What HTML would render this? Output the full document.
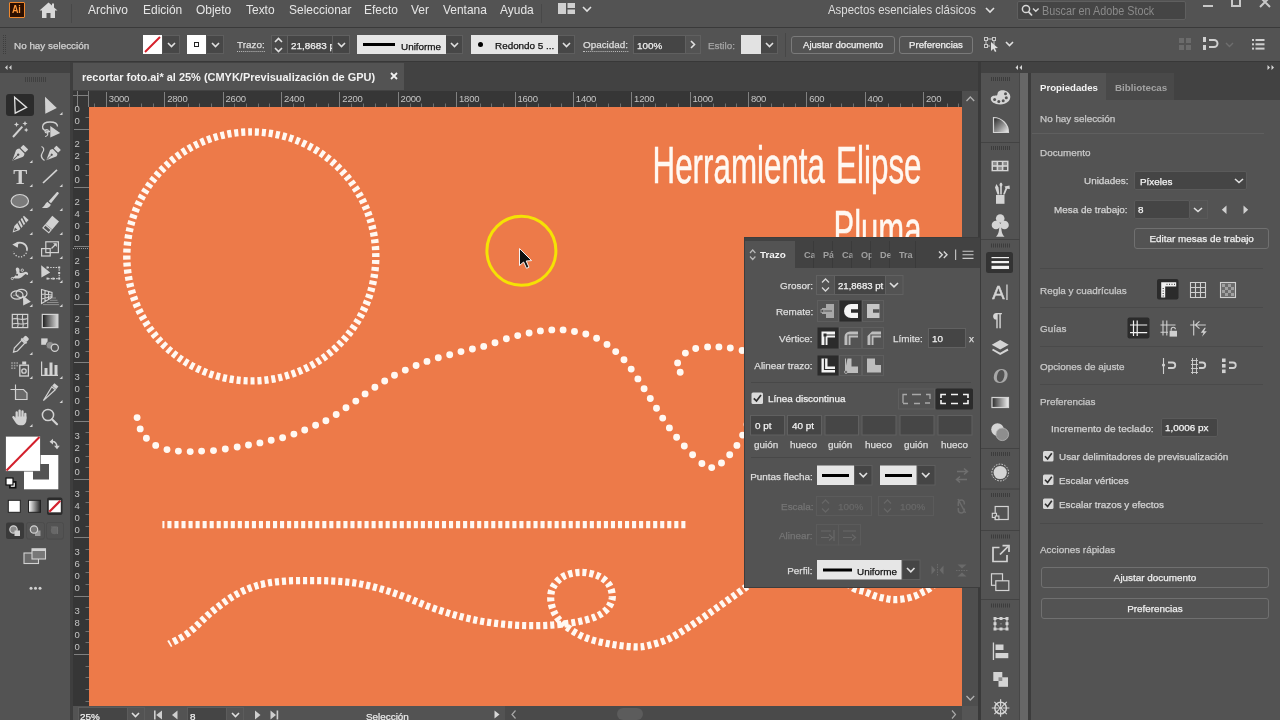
<!DOCTYPE html>
<html lang="es">
<head>
<meta charset="utf-8">
<title>recortar foto.ai</title>
<style>
*{box-sizing:border-box;margin:0;padding:0}
html,body{width:1280px;height:720px;overflow:hidden;background:#535353}
body{font-family:"Liberation Sans",sans-serif;font-size:11px;color:#dcdcdc;position:relative;-webkit-font-smoothing:antialiased}
.a{position:absolute}
.t{position:absolute;white-space:nowrap;line-height:14px;transform-origin:0 50%;transform:scaleX(.9)}
.tr{transform-origin:100% 50%}
.btn span{display:inline-block;transform:scaleX(1.03)}
svg{position:absolute;overflow:visible}
/* regions */
#menubar{left:0;top:0;width:1280px;height:27px;background:#535353}
#menuline{left:0;top:27px;width:1280px;height:1px;background:#3a3a3a}
#ctrlbar{left:0;top:28px;width:1280px;height:33px;background:#535353}
#ctrlline{left:0;top:61px;width:1280px;height:1px;background:#383838}
#tabwell{left:0;top:62px;width:1280px;height:29px;background:#424242}
.menu{font-size:13px;top:2px;color:#e6e6e6;line-height:15px;transform:scaleX(.92)}
.c{font-size:9.6px;line-height:15px;color:#dedede;transform:scaleX(1.03);-webkit-text-stroke:0.25px}
.field{position:absolute;background:#454545;border:1px solid #606060;border-radius:2px}
.btn{position:absolute;border:1px solid #7a7a7a;border-radius:3px;text-align:center;font-size:9.6px;-webkit-text-stroke:0.25px;color:#efefef;line-height:16px;white-space:nowrap}
.chev{stroke:#e0e0e0;stroke-width:1.6;fill:none}
</style>
</head>
<body>
<div id="root" style="position:absolute;left:0;top:0;width:1280px;height:720px;will-change:transform">
<!-- ===== top bars ===== -->
<div class="a" id="menubar"></div>
<div class="a" id="menuline"></div>
<div class="a" id="ctrlbar"></div>
<div class="a" id="ctrlline"></div>
<div class="a" id="tabwell"></div>
<!--MENUBAR-->
<div class="a" style="left:9px;top:2px;width:16px;height:16px;background:#2c0f00;border:1px solid #f0892e;border-radius:1px"></div>
<div class="t" style="left:12px;top:3px;font-size:10px;font-weight:bold;color:#ff9a3c;line-height:14px;letter-spacing:-0.3px">Ai</div>
<svg style="left:39px;top:2px" width="19" height="17" viewBox="0 0 19 17"><path d="M9.5 0.5L0.5 8.5H3V16H7.5V11H11.5V16H16V8.5H18.5L15 5.4V1.5H13V3.6Z" fill="#d8d8d8"/></svg>
<div class="a" style="left:71px;top:4px;width:1px;height:19px;background:#484848"></div>
<div class="t menu" style="left:88px">Archivo</div>
<div class="t menu" style="left:143px">Edición</div>
<div class="t menu" style="left:196px">Objeto</div>
<div class="t menu" style="left:246px">Texto</div>
<div class="t menu" style="left:289px">Seleccionar</div>
<div class="t menu" style="left:364px">Efecto</div>
<div class="t menu" style="left:411px">Ver</div>
<div class="t menu" style="left:443px">Ventana</div>
<div class="t menu" style="left:500px">Ayuda</div>
<div class="a" style="left:541px;top:4px;width:1px;height:19px;background:#484848"></div>
<svg style="left:558px;top:3px" width="17" height="12" viewBox="0 0 17 12"><rect x="0" y="0" width="8" height="11" fill="#d0d0d0"/><rect x="9.5" y="0" width="7.5" height="5" fill="#d0d0d0"/><rect x="9.5" y="6.5" width="7.5" height="4.5" fill="#d0d0d0"/></svg>
<svg style="left:582px;top:6px" width="10" height="7"><path class="chev" d="M1 1L5 5L9 1"/></svg>
<div class="t menu" style="left:828px;color:#dddddd;transform:scaleX(.879)">Aspectos esenciales clásicos</div>
<svg style="left:985px;top:7px" width="10" height="7"><path class="chev" d="M1 1L5 5L9 1"/></svg>
<div class="a" style="left:1017px;top:1px;width:169px;height:19px;background:#454545;border:1px solid #5f5f5f;border-radius:2px"></div>
<svg style="left:1021px;top:4px" width="20" height="13" viewBox="0 0 20 13"><circle cx="5" cy="5" r="3.6" stroke="#d8d8d8" stroke-width="1.5" fill="none"/><path d="M7.6 7.8L11 11.5" stroke="#d8d8d8" stroke-width="1.8"/><path d="M12 4.5L14.8 7.3L17.6 4.5" stroke="#d8d8d8" stroke-width="1.4" fill="none"/></svg>
<div class="t" style="left:1042px;top:4px;font-size:12px;color:#8a8a8a;line-height:14px">Buscar en Adobe Stock</div>
<div class="a" style="left:1203px;top:5px;width:10px;height:2px;background:#c8c8c8"></div>
<div class="a" style="left:1231px;top:0px;width:10px;height:7px;border:2px solid #c8c8c8;border-top:none"></div>
<svg style="left:1259px;top:0px" width="12" height="8"><path d="M1 -3L11 7M11 -3L1 7" stroke="#c8c8c8" stroke-width="2" fill="none"/></svg>

<!--/MENUBAR-->
<!--CTRLBAR-->
<svg style="left:3px;top:35px" width="5" height="19"><path d="M0.5 0V19M2.5 0V19" stroke="#3e3e3e" stroke-width="1" stroke-dasharray="1 1"/></svg>
<div class="t c" style="left:14px;top:38px;color:#d2d2d2">No hay selección</div>
<!-- fill swatch -->
<div class="a" style="left:143px;top:35px;width:19px;height:19px;background:#fff"></div>
<svg style="left:143px;top:35px" width="19" height="19"><path d="M2 17L17 2" stroke="#d6212b" stroke-width="2"/></svg>
<div class="a" style="left:163px;top:35px;width:17px;height:19px;background:#474747;border:1px solid #5e5e5e;border-left:none"></div>
<svg style="left:167px;top:42px" width="9" height="6"><path class="chev" d="M1 1L4.5 4.5L8 1"/></svg>
<!-- stroke swatch -->
<div class="a" style="left:187px;top:35px;width:19px;height:19px;background:#fff"></div>
<div class="a" style="left:194px;top:42px;width:5px;height:5px;border:1px solid #222"></div>
<div class="a" style="left:207px;top:35px;width:17px;height:19px;background:#474747;border:1px solid #5e5e5e;border-left:none"></div>
<svg style="left:211px;top:42px" width="9" height="6"><path class="chev" d="M1 1L4.5 4.5L8 1"/></svg>
<div class="t c" style="left:237px;top:38px;border-bottom:1px dotted #bdbdbd;line-height:13px">Trazo:</div>
<div class="a" style="left:271px;top:35px;width:17px;height:19px;background:#4a4a4a;border:1px solid #5e5e5e;border-right:none"></div>
<svg style="left:274px;top:37px" width="9" height="16"><path class="chev" d="M1 5L4.5 1.5L8 5M1 11L4.5 14.5L8 11" stroke-width="1.3"/></svg>
<div class="field" style="left:287px;top:35px;width:63px;height:19px;border-radius:0"></div>
<div class="t c" style="left:291px;top:38px;color:#f0f0f0;width:39.6px;overflow:hidden">21,8683 pt</div>
<div class="a" style="left:332px;top:36px;width:1px;height:17px;background:#5e5e5e"></div>
<svg style="left:337px;top:42px" width="9" height="6"><path class="chev" d="M1 1L4.5 4.5L8 1"/></svg>
<!-- profile -->
<div class="a" style="left:357px;top:35px;width:89px;height:19px;background:#e6e6e6"></div>
<div class="a" style="left:363px;top:43px;width:32px;height:3px;background:#000"></div>
<div class="t c" style="left:401px;top:39px;color:#111">Uniforme</div>
<div class="a" style="left:446px;top:35px;width:17px;height:19px;background:#474747;border:1px solid #5e5e5e;border-left:none"></div>
<svg style="left:450px;top:42px" width="9" height="6"><path class="chev" d="M1 1L4.5 4.5L8 1"/></svg>
<!-- brush -->
<div class="a" style="left:471px;top:35px;width:87px;height:19px;background:#e6e6e6"></div>
<div class="a" style="left:478px;top:42px;width:5px;height:5px;border-radius:50%;background:#000"></div>
<div class="t c" style="left:495px;top:38px;color:#111">Redondo 5 ...</div>
<div class="a" style="left:558px;top:35px;width:17px;height:19px;background:#474747;border:1px solid #5e5e5e;border-left:none"></div>
<svg style="left:562px;top:42px" width="9" height="6"><path class="chev" d="M1 1L4.5 4.5L8 1"/></svg>
<div class="t c" style="left:583px;top:38px;border-bottom:1px dotted #bdbdbd;line-height:13px">Opacidad:</div>
<div class="field" style="left:633px;top:35px;width:53px;height:19px;border-radius:0"></div>
<div class="a" style="left:685px;top:35px;width:16px;height:19px;border:1px solid #606060"></div>
<div class="t c" style="left:637px;top:38px;color:#f0f0f0">100%</div>
<svg style="left:690px;top:40px" width="6" height="9"><path class="chev" d="M1 1L4.5 4.5L1 8"/></svg>
<div class="t c" style="left:708px;top:38px;color:#a6a6a6">Estilo:</div>
<div class="a" style="left:785px;top:33px;width:1px;height:24px;background:#474747"></div>
<div class="a" style="left:741px;top:35px;width:20px;height:19px;background:#e2e2e2"></div>
<div class="a" style="left:761px;top:35px;width:17px;height:19px;background:#474747;border:1px solid #5e5e5e;border-left:none"></div>
<svg style="left:765px;top:42px" width="9" height="6"><path class="chev" d="M1 1L4.5 4.5L8 1"/></svg>
<div class="btn" style="left:791px;top:36px;width:104px;height:18px">Ajustar documento</div>
<div class="btn" style="left:899px;top:36px;width:74px;height:18px">Preferencias</div>
<!-- select-similar icon -->
<svg style="left:983px;top:36px" width="17" height="17" viewBox="0 0 17 17"><path d="M3 3H11V9M3 3V10H7" stroke="#c8c8c8" stroke-width="1" fill="none"/><rect x="1.5" y="1.5" width="3" height="3" fill="#535353" stroke="#c8c8c8"/><rect x="9.5" y="1.5" width="3" height="3" fill="#535353" stroke="#c8c8c8"/><rect x="1.5" y="8.5" width="3" height="3" fill="#535353" stroke="#c8c8c8"/><path d="M8 6L8 15L10.3 12.8L12 16L13.4 15.3L11.8 12.2L15 12Z" fill="#e0e0e0"/></svg>
<svg style="left:1005px;top:41px" width="9" height="6"><path class="chev" d="M1 1L4.5 4.5L8 1"/></svg>
<!-- right icons -->
<svg style="left:1179px;top:38px" width="13" height="13" viewBox="0 0 13 13"><g fill="#6b6b6b"><rect x="0" y="0" width="5" height="5"/><rect x="7" y="0" width="5" height="5"/><rect x="0" y="7" width="5" height="5"/><rect x="7" y="7" width="5" height="5"/></g></svg>
<svg style="left:1203px;top:37px" width="16" height="14" viewBox="0 0 16 14"><rect x="0" y="0" width="3" height="5" fill="#d0d0d0"/><rect x="0" y="8" width="3" height="5" fill="#d0d0d0"/><path d="M6 3H11A3.2 3.2 0 0 1 11 10H6" stroke="#d0d0d0" stroke-width="2" fill="none"/></svg>
<svg style="left:1225px;top:42px" width="9" height="6"><path d="M1 1L4.5 4.5L8 1" stroke="#6e6e6e" stroke-width="1.4" fill="none"/></svg>
<svg style="left:1252px;top:39px" width="13" height="11" viewBox="0 0 13 11"><g fill="#d0d0d0"><rect x="0" y="0" width="2" height="2"/><rect x="3.5" y="0" width="9" height="2"/><rect x="0" y="4.3" width="2" height="2"/><rect x="3.5" y="4.3" width="9" height="2"/><rect x="0" y="8.6" width="2" height="2"/><rect x="3.5" y="8.6" width="9" height="2"/></g></svg>

<!--/CTRLBAR-->
<!--TOOLBAR-->
<div class="a" style="left:0;top:62px;width:72px;height:11px;background:#424242"></div>
<div class="a" style="left:0;top:73px;width:72px;height:647px;background:#535353"></div>
<div class="a" style="left:6px;top:94px;width:28px;height:22px;background:#2b2b2b;border-radius:3px"></div>
<svg style="left:0;top:62px" width="72" height="658" viewBox="0 62 72 658">
<path d="M7.5 65L5 67.5L7.5 70ZM11.5 65L9 67.5L11.5 70Z" fill="#d0d0d0"/>
<path d="M25 77.5V82" stroke="#3d3d3d" stroke-width="17" stroke-dasharray="1 1" transform="rotate(0)" fill="none" style="display:none"/>
<path d="M25.5 77V82M27.5 77V82M29.5 77V82M31.5 77V82M33.5 77V82M35.5 77V82M37.5 77V82M39.5 77V82M41.5 77V82M43.5 77V82M45.5 77V82" stroke="#404040" stroke-width="1"/>
<path d="M14.6 97.3L15.2 113.2L26.6 107.4Z" fill="none" stroke="#e4e4e4" stroke-width="1.3" stroke-linejoin="miter"/>
<path d="M45 96.8L45.3 113.8L56.8 108Z" fill="#d2d2d2"/>
<path d="M62.5 112.0V115.0H59.5Z" fill="#d2d2d2"/>
<path d="M13 137L22.3 126.6" stroke="#d2d2d2" stroke-width="2"/>
<path d="M16.5 121.9L17.3 123.7L19.1 124.5L17.3 125.3L16.5 127.1L15.7 125.3L13.9 124.5L15.7 123.7Z" fill="#d2d2d2"/>
<path d="M25.0 120.9L25.8 122.7L27.6 123.5L25.8 124.3L25.0 126.1L24.2 124.3L22.4 123.5L24.2 122.7Z" fill="#d2d2d2"/>
<path d="M26.2 127.8L26.9 129.3L28.4 130.0L26.9 130.7L26.2 132.2L25.5 130.7L24.0 130.0L25.5 129.3Z" fill="#d2d2d2"/>
<path d="M50 131.5C44 131.5 42.3 128.5 42.6 126.5C43 123.5 46.5 122 50 122C54 122 57.5 123.5 57.5 126.5" fill="none" stroke="#d2d2d2" stroke-width="1.3"/>
<circle cx="46.7" cy="131.2" r="1.7" fill="none" stroke="#d2d2d2" stroke-width="1.1"/><path d="M47.5 132.8C48.5 134.5 47 136.5 45 136.5" fill="none" stroke="#d2d2d2" stroke-width="1.1"/>
<path d="M50.3 126L50.3 137.6L60.2 133Z" fill="#d2d2d2"/>
<g transform="translate(19.6 153.3) rotate(45) scale(1.10)"><path d="M0 9.5L-4.2 0.5C-4.6 -0.6 -4.2 -2 -3.2 -3L3.2 -3C4.2 -2 4.6 -0.6 4.2 0.5Z" fill="#d2d2d2"/><path d="M0 9V2.5" stroke="#535353" stroke-width="0.9"/><circle cx="0" cy="1.8" r="1.1" fill="#535353"/><rect x="-3.1" y="-8" width="6.2" height="3.9" rx="0.6" fill="#d2d2d2"/></g>
<path d="M32.5 160.0V163.0H29.5Z" fill="#d2d2d2"/>
<g transform="translate(53.0 153.5) rotate(45) scale(1.00)"><path d="M0 9.5L-4.2 0.5C-4.6 -0.6 -4.2 -2 -3.2 -3L3.2 -3C4.2 -2 4.6 -0.6 4.2 0.5Z" fill="#d2d2d2"/><path d="M0 9V2.5" stroke="#535353" stroke-width="0.9"/><circle cx="0" cy="1.8" r="1.1" fill="#535353"/><rect x="-3.1" y="-8" width="6.2" height="3.9" rx="0.6" fill="#d2d2d2"/></g>
<path d="M41.5 146.5C44 147.5 44.5 150 42.5 152.5C40.5 155.5 41.5 158.5 44.5 160.5" fill="none" stroke="#d2d2d2" stroke-width="1.2"/>
<text x="20.2" y="184.2" text-anchor="middle" font-family="Liberation Serif, serif" font-weight="bold" font-size="21" fill="#d2d2d2">T</text>
<path d="M32.5 184.0V187.0H29.5Z" fill="#d2d2d2"/>
<path d="M43 183L57 169.8" stroke="#d2d2d2" stroke-width="1.7"/>
<path d="M62.5 184.0V187.0H59.5Z" fill="#d2d2d2"/>
<ellipse cx="19.8" cy="201" rx="8.7" ry="6.5" fill="#7b7b7b" stroke="#d2d2d2" stroke-width="1.2"/>
<path d="M32.5 208.0V211.0H29.5Z" fill="#d2d2d2"/>
<g transform="translate(50.5 201.5) rotate(40)"><path d="M-1.2 -11.5C-0.5 -12.3 0.5 -12.3 1.2 -11.5L1.5 1H-1.5Z" fill="#d2d2d2"/><path d="M-2.3 2.2H2.3C3 5 2 8 -2.6 10.3C-1.5 8.5 -2.8 5 -2.3 2.2Z" fill="#d2d2d2"/></g>
<path d="M62.5 208.0V211.0H59.5Z" fill="#d2d2d2"/>
<g transform="translate(19.8 224.8) rotate(43)"><path d="M-3.2 -9.5H3.2V4.5L0 10.5L-3.2 4.5Z" fill="#d2d2d2"/><path d="M-3.6 -7.5L3.6 -5M-3.6 -4L3.6 -1.5M-3.6 -0.5L3.6 2" stroke="#535353" stroke-width="1.3"/><path d="M-1.7 5.3H1.7L0 8.6Z" fill="#535353"/></g>
<path d="M32.5 232.0V235.0H29.5Z" fill="#d2d2d2"/>
<g transform="translate(50.5 224.8) rotate(40)"><rect x="-4.4" y="-8" width="8.8" height="10.5" fill="#d2d2d2"/><rect x="-3.8" y="3.4" width="7.6" height="3.8" fill="none" stroke="#d2d2d2" stroke-width="1.2"/></g>
<path d="M62.5 232.0V235.0H59.5Z" fill="#d2d2d2"/>
<path d="M15.5 244.3A7 7 0 0 1 27 250" fill="none" stroke="#d2d2d2" stroke-width="1.7"/><path d="M12.3 244.6L18.5 241.4L17.8 247.8Z" fill="#d2d2d2"/>
<path d="M27 250A7 7 0 0 1 13.2 251.5" fill="none" stroke="#d2d2d2" stroke-width="1.3" stroke-dasharray="1.2 1.6"/>
<path d="M32.5 256.0V259.0H29.5Z" fill="#d2d2d2"/>
<rect x="45.8" y="241.8" width="12.6" height="10.8" fill="none" stroke="#d2d2d2" stroke-width="1.2"/><rect x="41.6" y="248.6" width="8.6" height="7.4" fill="none" stroke="#d2d2d2" stroke-width="1.2"/>
<path d="M51.5 248.5L56 244" stroke="#d2d2d2" stroke-width="1.2"/><path d="M53 243.3H56.8V247Z" fill="#d2d2d2"/>
<path d="M62.5 256.0V259.0H59.5Z" fill="#d2d2d2"/>
<path d="M12.3 277.5C15 277 17.5 274 16 270.5C15 268 17.5 266.5 19 268.5C20.5 270.5 18 273 21 273C24 273 25.5 270.5 27.5 272.5C29 274 27.5 276 26.5 274.5C25 272.5 23 278 19 278.5C16 278.8 14 278.5 12.3 277.5Z" fill="#d2d2d2"/><circle cx="22.3" cy="270.2" r="1.2" fill="none" stroke="#d2d2d2" stroke-width="0.9"/><circle cx="17" cy="274.8" r="1.1" fill="#535353"/><circle cx="12.3" cy="278.5" r="1.1" fill="none" stroke="#d2d2d2" stroke-width="0.9"/>
<path d="M32.5 280.0V283.0H29.5Z" fill="#d2d2d2"/>
<path d="M41.2 265.2L41.4 277.4L50.2 272.4Z" fill="#d2d2d2"/>
<path d="M47.5 267.5H59.2V278.6H47.5" fill="none" stroke="#d2d2d2" stroke-width="1.1" stroke-dasharray="1.5 1.2"/>
<rect x="46.5" y="266.5" width="2" height="2" fill="#d2d2d2"/>
<rect x="58.2" y="266.5" width="2" height="2" fill="#d2d2d2"/>
<rect x="58.2" y="277.6" width="2" height="2" fill="#d2d2d2"/>
<rect x="46.5" y="277.6" width="2" height="2" fill="#d2d2d2"/>
<rect x="52.3" y="277.6" width="2" height="2" fill="#d2d2d2"/>
<rect x="58.2" y="272.0" width="2" height="2" fill="#d2d2d2"/>
<path d="M62.5 280.0V283.0H59.5Z" fill="#d2d2d2"/>
<ellipse cx="17" cy="295" rx="6" ry="4.2" fill="none" stroke="#d2d2d2" stroke-width="1.2"/><ellipse cx="21.5" cy="293.5" rx="5.5" ry="4.2" fill="none" stroke="#d2d2d2" stroke-width="1.2"/><path d="M13.5 295.3H19" stroke="#d2d2d2" stroke-width="1.1" stroke-dasharray="1 1"/>
<path d="M23 295.5L23.2 305.5L30.8 301.8Z" fill="#d2d2d2"/>
<path d="M32.5 304.0V307.0H29.5Z" fill="#d2d2d2"/>
<path d="M41.5 289.5V303.5L52 297.5V292.5ZM41.5 294L52 295M41.5 299L52 296.5M45 290.5V301.5M48.5 291.5V299.5" fill="none" stroke="#d2d2d2" stroke-width="1.1"/>
<path d="M52 298H56M50 300.3H57.5M47 302.5H58.5M43 304.6H59" stroke="#8d8d8d" stroke-width="1"/>
<path d="M62.5 304.0V307.0H59.5Z" fill="#d2d2d2"/>
<rect x="12.3" y="314.4" width="15.4" height="13.2" fill="none" stroke="#d2d2d2" stroke-width="1.2"/><path d="M12.3 319C17 317.5 21 321 27.7 318.5M12.3 324C17 322 22 326 27.7 323M17.5 314.4C16 319 19.5 323 17.5 327.6M22.8 314.4C21 319 24.5 323 22.8 327.6" fill="none" stroke="#d2d2d2" stroke-width="1.1"/>
<defs><linearGradient id="gr1" x1="0" x2="1"><stop offset="0" stop-color="#1a1a1a"/><stop offset="1" stop-color="#dcdcdc"/></linearGradient></defs>
<rect x="42.3" y="314.4" width="15.6" height="13.2" fill="url(#gr1)" stroke="#d2d2d2" stroke-width="1.2"/>
<g transform="translate(20.3 344.8) rotate(43)"><rect x="-2.6" y="-10.5" width="5.2" height="4.5" rx="1.4" fill="#d2d2d2"/><rect x="-3.6" y="-6.3" width="7.2" height="2" fill="#d2d2d2"/><path d="M-2.1 -4.2V6.5L0 10L2.1 6.5V-4.2Z" fill="none" stroke="#d2d2d2" stroke-width="1.2"/></g>
<path d="M32.5 352.0V355.0H29.5Z" fill="#d2d2d2"/>
<rect x="41.2" y="338.4" width="6.4" height="6.4" fill="#d2d2d2"/><circle cx="50" cy="345.3" r="3.9" fill="#8c8c8c" stroke="#535353" stroke-width="0.8"/><circle cx="54.8" cy="347.8" r="3.6" fill="#535353" stroke="#d2d2d2" stroke-width="1.2"/>
<rect x="11.2" y="362.2" width="1.6" height="1.6" fill="#9c9c9c"/>
<rect x="11.2" y="364.8" width="1.6" height="1.6" fill="#9c9c9c"/>
<rect x="11.2" y="367.4" width="1.6" height="1.6" fill="#9c9c9c"/>
<rect x="13.8" y="362.2" width="1.6" height="1.6" fill="#9c9c9c"/>
<rect x="13.8" y="364.8" width="1.6" height="1.6" fill="#9c9c9c"/>
<rect x="13.8" y="367.4" width="1.6" height="1.6" fill="#9c9c9c"/>
<rect x="16.4" y="362.2" width="1.6" height="1.6" fill="#9c9c9c"/>
<rect x="16.4" y="364.8" width="1.6" height="1.6" fill="#9c9c9c"/>
<rect x="19.8" y="365.2" width="8.6" height="10.8" fill="none" stroke="#d2d2d2" stroke-width="1.3"/><rect x="22.2" y="361.5" width="4" height="3" fill="#d2d2d2"/><circle cx="24" cy="371" r="2.2" fill="none" stroke="#d2d2d2" stroke-width="1.3"/>
<path d="M32.5 376.0V379.0H29.5Z" fill="#d2d2d2"/>
<path d="M41.6 361.5V375.4H58" fill="none" stroke="#d2d2d2" stroke-width="1.2"/><rect x="44.5" y="368" width="3" height="7" fill="#d2d2d2"/><rect x="49.5" y="362.5" width="3" height="12.5" fill="#d2d2d2"/><rect x="54.5" y="365" width="3" height="10" fill="#d2d2d2"/>
<path d="M62.5 376.0V379.0H59.5Z" fill="#d2d2d2"/>
<path d="M10.5 389.5H19M15.5 384.5V392" stroke="#d2d2d2" stroke-width="1.1"/><path d="M15.5 389.5H23.5L27 393V399.5H15.5Z" fill="#6a6a6a" stroke="#d2d2d2" stroke-width="1.2"/>
<g transform="translate(50 392.5) rotate(40)"><path d="M-2.6 -10H2.6V-6.5H-2.6Z" fill="#d2d2d2"/><path d="M-2.3 -5.5H2.3L0.2 10.5Z" fill="none" stroke="#d2d2d2" stroke-width="1.2"/></g>
<path d="M62.5 400.0V403.0H59.5Z" fill="#d2d2d2"/>
<path d="M16.7 418V412.3M19.6 417.5V410.6M22.5 417.5V411.4M25.3 418.5V413.8" stroke="#d2d2d2" stroke-width="2.3" stroke-linecap="round" fill="none"/><path d="M15.55 416.5H26.45V419.5C26.45 423 24.5 425.3 21.5 425.3H20C17.6 425.3 16.4 423.8 15 421.8L12.4 417.8C11.8 416.5 13.4 415.4 14.4 416.6L15.55 418.2Z" fill="#d2d2d2"/>
<path d="M32.5 424.0V427.0H29.5Z" fill="#d2d2d2"/>
<circle cx="48" cy="415" r="5.6" fill="none" stroke="#d2d2d2" stroke-width="1.5"/><path d="M52 419.2L57 424.2" stroke="#d2d2d2" stroke-width="2.2" stroke-linecap="round"/>
<rect x="24" y="455" width="34.3" height="34.3" fill="#fff"/><rect x="33" y="464" width="16" height="15.5" fill="#535353"/>
<rect x="5.7" y="436.2" width="34.6" height="35" fill="#fff" stroke="#4a4a4a" stroke-width="0.6"/><path d="M6.5 470.5L39.5 437" stroke="#d3202c" stroke-width="2"/>
<path d="M51.5 441.5C55 441 57 443.5 56.8 446.5" fill="none" stroke="#d2d2d2" stroke-width="1.5"/><path d="M49.5 441.8L53 438.8V444.6ZM54 445.8H59.8L57 449.3Z" fill="#d2d2d2"/>
<rect x="9.5" y="481.5" width="6.5" height="6.5" fill="#111" stroke="#111"/><rect x="10.8" y="482.8" width="4" height="4" fill="#fff"/><rect x="6" y="478" width="7" height="7" fill="#fff" stroke="#111" stroke-width="1.2"/>
<rect x="47" y="497.5" width="15.5" height="17.5" rx="2" fill="#2b2b2b"/>
<rect x="8.3" y="500.3" width="12" height="12" fill="#fff" stroke="#222" stroke-width="1"/>
<defs><linearGradient id="gr2" x1="0" x2="1"><stop offset="0" stop-color="#fff"/><stop offset="1" stop-color="#222"/></linearGradient></defs>
<rect x="28.5" y="500.3" width="12" height="12" fill="url(#gr2)" stroke="#222" stroke-width="1"/>
<rect x="48.8" y="500.3" width="12" height="12" fill="#fff"/><path d="M49.3 511.8L60.3 500.8" stroke="#d3202c" stroke-width="2.2"/>
<rect x="6" y="522.5" width="18" height="16.5" rx="2" fill="#3a3a3a"/><rect x="26.5" y="522.5" width="18" height="16.5" rx="2" fill="none" stroke="#4a4a4a" stroke-width="0.8"/><rect x="46.5" y="522.5" width="17" height="16.5" rx="2" fill="none" stroke="#4a4a4a" stroke-width="0.8"/>
<circle cx="13.5" cy="529.5" r="3.7" fill="#8a8a8a" stroke="#d2d2d2" stroke-width="1.2"/><rect x="14.5" y="530.5" width="5.5" height="5.5" fill="#d2d2d2"/>
<rect x="35" y="530.5" width="5.5" height="5.5" fill="#9a9a9a"/><circle cx="34" cy="529.5" r="3.7" fill="#777" stroke="#d2d2d2" stroke-width="1.2"/>
<circle cx="54.5" cy="530.5" r="3.7" fill="#686868"/><path d="M51 527H57.5V534" fill="none" stroke="#707070" stroke-width="1"/>
<rect x="24" y="553" width="14.5" height="10.5" fill="#6a6a6a" stroke="#d2d2d2" stroke-width="1.1"/><rect x="32" y="548.8" width="13.5" height="10.2" fill="#777" stroke="#d2d2d2" stroke-width="1.1"/><rect x="32" y="548.8" width="13.5" height="2.2" fill="#d2d2d2"/>
<circle cx="31" cy="588.3" r="1.5" fill="#d2d2d2"/><circle cx="35.5" cy="588.3" r="1.5" fill="#d2d2d2"/><circle cx="40" cy="588.3" r="1.5" fill="#d2d2d2"/>
</svg>
<!--/TOOLBAR-->
<!--DOC-->
<div class="a" style="left:70px;top:62px;width:3px;height:658px;background:#3e3e3e"></div>
<div class="a" style="left:73px;top:63px;width:331px;height:27px;background:#535353"></div>
<div class="t" style="left:82px;top:70px;font-size:11px;font-weight:bold;color:#f2f2f2;transform:scaleX(.997)">recortar foto.ai* al 25% (CMYK/Previsualización de GPU)</div>
<svg style="left:390px;top:72px" width="8" height="8"><path d="M1 1L7 7M7 1L1 7" stroke="#f0f0f0" stroke-width="1.8" fill="none"/></svg>
<div class="a" style="left:73px;top:91px;width:889px;height:16px;background:#363636"></div>
<div class="a" style="left:73px;top:107px;width:16px;height:599px;background:#363636"></div>
<div class="a" id="canvas" style="left:89px;top:107px;width:873px;height:599px;background:#ed7a49;overflow:hidden"></div>
<svg style="left:0;top:0" width="1280" height="720" font-family="Liberation Sans, sans-serif" font-size="9.5" fill="#c4c4c4" letter-spacing="-0.2"><path d="M73 95.5H89M77.5 91V107M88.5 91V107" stroke="#808080" stroke-width="1" fill="none"/><path d="M106.5 92V107M164.5 92V107M223.5 92V107M281.5 92V107M339.5 92V107M398.5 92V107M456.5 92V107M515.5 92V107M573.5 92V107M631.5 92V107M690.5 92V107M748.5 92V107M806.5 92V107M865.5 92V107M923.5 92V107" stroke="#808080" stroke-width="1" fill="none"/><path d="M94.5 103.5V107M118.5 103.5V107M129.5 103.5V107M141.5 103.5V107M153.5 103.5V107M176.5 103.5V107M188.5 103.5V107M199.5 103.5V107M211.5 103.5V107M234.5 103.5V107M246.5 103.5V107M258.5 103.5V107M269.5 103.5V107M293.5 103.5V107M304.5 103.5V107M316.5 103.5V107M328.5 103.5V107M351.5 103.5V107M363.5 103.5V107M375.5 103.5V107M386.5 103.5V107M410.5 103.5V107M421.5 103.5V107M433.5 103.5V107M445.5 103.5V107M468.5 103.5V107M480.5 103.5V107M491.5 103.5V107M503.5 103.5V107M526.5 103.5V107M538.5 103.5V107M550.5 103.5V107M561.5 103.5V107M585.5 103.5V107M596.5 103.5V107M608.5 103.5V107M620.5 103.5V107M643.5 103.5V107M655.5 103.5V107M666.5 103.5V107M678.5 103.5V107M701.5 103.5V107M713.5 103.5V107M725.5 103.5V107M736.5 103.5V107M760.5 103.5V107M771.5 103.5V107M783.5 103.5V107M795.5 103.5V107M818.5 103.5V107M830.5 103.5V107M841.5 103.5V107M853.5 103.5V107M876.5 103.5V107M888.5 103.5V107M900.5 103.5V107M912.5 103.5V107M935.5 103.5V107M947.5 103.5V107M958.5 103.5V107" stroke="#707070" stroke-width="1" fill="none"/><text x="108.8" y="102">3000</text><text x="167.2" y="102">2800</text><text x="225.5" y="102">2600</text><text x="283.9" y="102">2400</text><text x="342.3" y="102">2200</text><text x="400.6" y="102">2000</text><text x="459.0" y="102">1800</text><text x="517.4" y="102">1600</text><text x="575.8" y="102">1400</text><text x="634.1" y="102">1200</text><text x="692.5" y="102">1000</text><text x="750.9" y="102">800</text><text x="809.2" y="102">600</text><text x="867.6" y="102">400</text><text x="926.0" y="102">200</text><path d="M74 129.5H89M74 187.5H89M74 246.5H89M74 304.5H89M74 362.5H89M74 421.5H89M74 479.5H89M74 537.5H89M74 596.5H89M74 654.5H89" stroke="#808080" stroke-width="1" fill="none"/><path d="M85.5 117.5H89M85.5 140.5H89M85.5 152.5H89M85.5 164.5H89M85.5 175.5H89M85.5 199.5H89M85.5 211.5H89M85.5 222.5H89M85.5 234.5H89M85.5 257.5H89M85.5 269.5H89M85.5 281.5H89M85.5 292.5H89M85.5 316.5H89M85.5 327.5H89M85.5 339.5H89M85.5 351.5H89M85.5 374.5H89M85.5 386.5H89M85.5 397.5H89M85.5 409.5H89M85.5 432.5H89M85.5 444.5H89M85.5 456.5H89M85.5 467.5H89M85.5 491.5H89M85.5 502.5H89M85.5 514.5H89M85.5 526.5H89M85.5 549.5H89M85.5 561.5H89M85.5 572.5H89M85.5 584.5H89M85.5 607.5H89M85.5 619.5H89M85.5 631.5H89M85.5 642.5H89M85.5 666.5H89M85.5 677.5H89M85.5 689.5H89M85.5 701.5H89" stroke="#707070" stroke-width="1" fill="none"/><text x="74.6" y="112.4">0</text><text x="74.6" y="124.4">0</text><text x="74.6" y="146.8">2</text><text x="74.6" y="158.8">2</text><text x="74.6" y="170.8">0</text><text x="74.6" y="182.8">0</text><text x="74.6" y="205.2">2</text><text x="74.6" y="217.2">4</text><text x="74.6" y="229.2">0</text><text x="74.6" y="241.2">0</text><text x="74.6" y="263.5">2</text><text x="74.6" y="275.5">6</text><text x="74.6" y="287.5">0</text><text x="74.6" y="299.5">0</text><text x="74.6" y="321.9">2</text><text x="74.6" y="333.9">8</text><text x="74.6" y="345.9">0</text><text x="74.6" y="357.9">0</text><text x="74.6" y="380.3">3</text><text x="74.6" y="392.3">0</text><text x="74.6" y="404.3">0</text><text x="74.6" y="416.3">0</text><text x="74.6" y="438.6">3</text><text x="74.6" y="450.6">2</text><text x="74.6" y="462.6">0</text><text x="74.6" y="474.6">0</text><text x="74.6" y="497.0">3</text><text x="74.6" y="509.0">4</text><text x="74.6" y="521.0">0</text><text x="74.6" y="533.0">0</text><text x="74.6" y="555.4">3</text><text x="74.6" y="567.4">6</text><text x="74.6" y="579.4">0</text><text x="74.6" y="591.4">0</text><text x="74.6" y="613.8">3</text><text x="74.6" y="625.8">8</text><text x="74.6" y="637.8">0</text><text x="74.6" y="649.8">0</text><path d="M73 248.500H89" stroke="#9a9a9a" stroke-width="1" stroke-dasharray="1 1"/></svg>
<div class="a" style="left:962px;top:91px;width:16px;height:615px;background:#4e4e4e"></div>
<svg style="left:966px;top:96px" width="9" height="6"><path d="M0.5 5L4.3 1L8.2 5" stroke="#b0b0b0" stroke-width="1.3" fill="none"/></svg>
<svg style="left:966px;top:695px" width="9" height="6"><path d="M0.5 1L4.3 5L8.2 1" stroke="#b0b0b0" stroke-width="1.3" fill="none"/></svg>
<div class="a" style="left:978px;top:62px;width:3px;height:658px;background:#3a3a3a"></div>
<!--/DOC-->
<!--CANVAS-->
<svg style="left:89px;top:107px" width="873" height="599" viewBox="89 107 873 599">
<circle cx="251.3" cy="256.4" r="124.5" fill="none" stroke="#fff8f2" stroke-width="7.4" stroke-dasharray="4.050 2.934" stroke-dashoffset="3.4" transform="rotate(-90 251.3 256.4)"/>
<path d="M137.1 417.6h0M140.2 428.9h0M146.4 438.2h0M155.7 445.4h0M167.0 449.6h0M178.4 451.1h0M190.2 451.6h0M201.6 451.1h0M213.5 450.6h0M225.3 449.0h0M237.2 447.0h0M248.5 445.0h0M259.9 442.9h0M271.2 440.3h0M282.6 437.7h0M293.9 434.1h0M304.7 430.0h0M315.6 425.3h0M325.9 420.7h0M336.2 414.5h0M346.0 407.8h0M355.8 401.1h0M365.1 393.9h0M374.9 387.2h0M384.7 381.0h0M394.5 375.3h0M405.3 370.1h0M416.1 365.5h0M427.0 361.4h0M438.3 357.8h0M449.7 354.7h0M461.0 351.6h0M472.4 349.0h0M483.7 346.4h0M495.0 342.8h0M506.4 338.7h0M517.7 335.6h0M529.1 333.0h0M540.4 330.9h0M551.8 329.9h0M563.1 329.9h0M574.5 331.5h0M585.8 334.0h0M596.6 338.2h0M607.0 344.4h0M615.7 351.6h0M624.0 359.8h0M631.2 369.1h0M637.9 378.9h0M644.1 388.7h0M650.3 398.5h0M656.5 408.3h0M662.7 418.1h0M669.4 427.9h0M676.6 437.2h0M684.3 446.0h0M692.6 454.7h0M701.9 463.5h0M711.7 467.6h0M721.5 463.0h0M729.7 454.7h0M736.9 445.4h0M742.6 435.1h0M747.0 424.5h0M680.2 372.2h0M677.6 362.9h0M685.4 353.1h0M695.7 348.5h0M707.6 346.9h0M718.9 346.9h0M730.3 348.0h0M742.1 350.5h0M753.0 354.0h0" fill="none" stroke="#fff8f2" stroke-width="6.9" stroke-linecap="round"/>
<path d="M162.4 524.6H687.4" fill="none" stroke="#fff8f2" stroke-width="7.2" stroke-dasharray="4.1 2.94" stroke-dashoffset="2.05"/>
<path d="M169.1 644.0C172.3 642.1 181.1 638.4 188.4 632.9C195.7 627.4 204.6 617.6 212.7 611.1C220.8 604.6 228.8 598.5 236.9 594.1C245.0 589.7 253.0 586.7 261.1 584.5C269.2 582.3 277.2 581.8 285.3 581.1C293.4 580.5 301.4 580.6 309.5 580.6C317.6 580.6 325.6 580.6 333.7 581.1C341.8 581.6 349.9 582.1 358.0 583.5C366.1 584.9 374.1 587.0 382.2 589.3C390.3 591.6 398.3 594.5 406.4 597.5C414.5 600.5 422.5 604.3 430.6 607.2C438.7 610.1 446.7 612.7 454.8 615.0C462.9 617.3 471.0 619.3 479.1 620.8C487.2 622.3 495.2 623.4 503.3 624.2C511.4 625.0 519.4 625.5 527.5 625.6C535.6 625.8 543.6 625.7 551.7 625.1C559.8 624.5 568.6 623.6 575.9 622.2C583.2 620.8 590.0 619.1 595.3 616.9C600.5 614.6 604.6 611.9 607.4 608.7C610.2 605.5 612.0 601.5 612.3 597.5C612.5 593.5 611.3 588.1 608.9 584.5C606.5 580.9 602.4 577.7 597.7 575.7C593.0 573.7 586.4 572.2 580.8 572.3C575.1 572.4 568.4 573.8 563.8 576.2C559.2 578.6 555.4 582.9 553.2 586.9C551.0 590.9 550.4 595.7 550.8 600.4C551.2 605.1 553.0 610.6 555.6 615.0C558.2 619.4 561.3 622.8 566.3 626.6C571.3 630.4 578.3 634.8 585.6 637.7C592.9 640.6 601.8 642.5 609.9 644.0C618.0 645.5 627.6 646.6 634.1 646.9C640.6 647.1 643.0 646.8 648.6 645.5C654.2 644.2 661.5 642.1 668.0 639.2C674.5 636.3 680.8 632.0 687.3 628.0C693.8 624.0 700.2 619.4 706.7 615.0C713.2 610.6 719.8 605.9 726.1 601.4C732.4 596.9 738.9 592.4 744.5 588.3C750.1 584.2 757.4 578.9 760.0 577.0" fill="none" stroke="#fff8f2" stroke-width="7.2" stroke-dasharray="4.1 2.94" stroke-dashoffset="2.05"/>
<path d="M843.0 578.0C844.8 579.7 849.8 586.0 853.5 588.3C857.2 590.6 861.4 590.6 865.0 591.9C868.6 593.2 871.9 594.9 875.4 596.0C878.9 597.1 882.7 597.9 885.8 598.5C888.9 599.1 891.1 599.6 894.2 599.6C897.3 599.6 901.1 599.4 904.6 598.8C908.1 598.2 911.9 597.1 915.0 596.0C918.1 594.9 921.0 593.0 923.3 591.9C925.5 590.8 926.0 591.0 928.5 589.2C931.0 587.4 936.4 582.4 938.0 581.0" fill="none" stroke="#fff8f2" stroke-width="7.2" stroke-dasharray="4.1 2.94"/>
<text x="921.5" y="183.2" text-anchor="end" word-spacing="4" font-family="Liberation Sans, sans-serif" font-size="51.5" stroke="#fff8f2" stroke-width="0.5" fill="#fff8f2" textLength="269" lengthAdjust="spacingAndGlyphs">Herramienta Elipse</text>
<text x="921.5" y="246.6" text-anchor="end" font-family="Liberation Sans, sans-serif" font-size="51.5" stroke="#fff8f2" stroke-width="0.5" fill="#fff8f2" textLength="88" lengthAdjust="spacingAndGlyphs">Pluma</text>
<circle cx="521.4" cy="250.8" r="34.5" fill="none" stroke="#f5e204" stroke-width="3"/>
<path d="M519.5 248.5L519.5 265.5L523.6 262L526.5 268.3L529 267.2L526.2 261L531.6 260.6Z" fill="#111" stroke="#f4f4f4" stroke-width="1"/>
</svg>
<!--/CANVAS-->
<!--STATUS-->
<div class="a" style="left:73px;top:706px;width:905px;height:14px;background:#535353"></div>
<div class="a" style="left:78px;top:707px;width:50px;height:13px;background:#454545;border:1px solid #5c5c5c;border-bottom:none"></div>
<div class="t c" style="left:80px;top:709px;color:#f0f0f0">25%</div>
<div class="a" style="left:128px;top:707px;width:17px;height:13px;border:1px solid #5c5c5c;border-left:none;border-bottom:none"></div>
<svg style="left:131px;top:712px" width="9" height="6"><path class="chev" d="M1 1L4.5 4.5L8 1"/></svg>
<svg style="left:153px;top:710px" width="130" height="10"><g fill="#cfcfcf"><rect x="1" y="0.5" width="1.6" height="9"/><path d="M9 0.5V9.5L3.2 5Z"/><path d="M24.5 0.5V9.5L19 5Z"/><path d="M102 0.5V9.5L107.5 5Z"/><path d="M117.5 0.5V9.5L123 5Z"/><rect x="123.6" y="0.5" width="1.6" height="9"/></g></svg>
<div class="a" style="left:187px;top:707px;width:40px;height:13px;background:#454545;border:1px solid #5c5c5c;border-bottom:none"></div>
<div class="t c" style="left:190px;top:709px;color:#f0f0f0">8</div>
<div class="a" style="left:227px;top:707px;width:17px;height:13px;border:1px solid #5c5c5c;border-left:none;border-bottom:none"></div>
<svg style="left:231px;top:712px" width="9" height="6"><path class="chev" d="M1 1L4.5 4.5L8 1"/></svg>
<div class="t c" style="left:366px;top:709px;color:#e8e8e8">Selección</div>
<svg style="left:494px;top:710px" width="6" height="9"><path d="M0.5 0.5V8.5L5.5 4.5Z" fill="#d8d8d8"/></svg>
<div class="a" style="left:505px;top:706px;width:457px;height:14px;background:#4a4a4a"></div>
<svg style="left:511px;top:710px" width="6" height="9"><path d="M4.5 0.5L1 4.5L4.5 8.5" stroke="#a8a8a8" stroke-width="1.2" fill="none"/></svg>
<svg style="left:951px;top:710px" width="6" height="9"><path d="M1 0.5L4.5 4.5L1 8.5" stroke="#a8a8a8" stroke-width="1.2" fill="none"/></svg>
<div class="a" style="left:617px;top:708px;width:26px;height:12px;border-radius:6px;background:#5c5c5c"></div>
<div class="a" style="left:962px;top:706px;width:16px;height:14px;background:#555555"></div>

<!--/STATUS-->
<!--DOCK-->
<div class="a" style="left:981px;top:62px;width:299px;height:11px;background:#424242"></div>
<div class="a" style="left:981px;top:73px;width:39px;height:647px;background:#535353"></div>
<div class="a" style="left:1020px;top:73px;width:8px;height:647px;background:#676767"></div>
<div class="a" style="left:1019px;top:73px;width:1px;height:647px;background:#474747"></div>
<div class="a" style="left:1028px;top:73px;width:3px;height:647px;background:#3c3c3c"></div>
<svg style="left:976px;top:62px" width="60" height="658" viewBox="976 62 60 658">
<path d="M1018 65L1015.5 67.5L1018 70ZM1022 65L1019.5 67.5L1022 70Z" fill="#d8d8d8"/>
<path d="M991.5 77.0V81.0M993.5 77.0V81.0M995.5 77.0V81.0M997.5 77.0V81.0M999.5 77.0V81.0M1001.5 77.0V81.0M1003.5 77.0V81.0M1005.5 77.0V81.0M1007.5 77.0V81.0M1009.5 77.0V81.0" stroke="#3c3c3c" stroke-width="1"/>
<path d="M1001.5 90.2C1006 89.8 1010 92.5 1010.3 96.5C1010.6 101 1006 104.6 1000 104.4C994.5 104.2 990.5 102 990.8 98.5C991 96 994 95.8 996 95.6C998 95.4 997.2 93.5 998 92.2C998.7 91 1000 90.4 1001.5 90.2Z" fill="#d4d4d4"/>
<circle cx="994.6" cy="99.6" r="1.5" fill="#535353"/>
<circle cx="998.8" cy="101.4" r="1.5" fill="#535353"/>
<circle cx="1003.2" cy="100.8" r="1.5" fill="#535353"/>
<circle cx="1006.3" cy="97.8" r="1.5" fill="#535353"/>
<circle cx="1005.5" cy="93.8" r="1.5" fill="#535353"/>
<defs><linearGradient id="gd1" x1="0" x2="1" y1="0" y2="1"><stop offset="0" stop-color="#222"/><stop offset="0.6" stop-color="#999"/><stop offset="1" stop-color="#f2f2f2"/></linearGradient></defs>
<path d="M993.5 117.5V132.5H1008.5C1008.5 124.5 1002 117.5 993.5 117.5Z" fill="url(#gd1)" stroke="#d4d4d4" stroke-width="1.2"/>
<path d="M981 142.5H1020" stroke="#434343" stroke-width="1"/>
<path d="M991.5 146.0V150.0M993.5 146.0V150.0M995.5 146.0V150.0M997.5 146.0V150.0M999.5 146.0V150.0M1001.5 146.0V150.0M1003.5 146.0V150.0M1005.5 146.0V150.0M1007.5 146.0V150.0M1009.5 146.0V150.0" stroke="#3c3c3c" stroke-width="1"/>
<rect x="991.5" y="160.7" width="17" height="10.6" fill="#d4d4d4"/>
<rect x="993.0" y="162.0" width="3.6" height="3.2" fill="#8c8c8c"/>
<rect x="993.0" y="166.8" width="3.6" height="3.2" fill="#5e5e5e"/>
<rect x="998.2" y="162.0" width="3.6" height="3.2" fill="#5e5e5e"/>
<rect x="998.2" y="166.8" width="3.6" height="3.2" fill="#8c8c8c"/>
<rect x="1003.4" y="162.0" width="3.6" height="3.2" fill="#8c8c8c"/>
<rect x="1003.4" y="166.8" width="3.6" height="3.2" fill="#5e5e5e"/>
<rect x="996" y="195" width="8.5" height="8.8" fill="#d4d4d4"/>
<path d="M997.5 194.5L995 187.5L996.5 184L998.5 187.5L999.3 194.5Z" fill="#d4d4d4"/><path d="M1000.2 194.5V186.5C999 185 999.5 183 1001 182.5C1002.5 183 1003 185 1001.8 186.5V194.5Z" fill="#d4d4d4"/><path d="M1003 194.5L1005.5 188L1004.5 186.5L1009.5 185.5L1009.8 189L1007.2 188.7L1004.8 194.5Z" fill="#d4d4d4"/>
<circle cx="1000.2" cy="218.5" r="4.3" fill="#d4d4d4"/><circle cx="996" cy="225" r="4.3" fill="#d4d4d4"/><circle cx="1004.5" cy="225" r="4.3" fill="#d4d4d4"/><path d="M999.3 224H1001.2C1001.2 231 1002 234.5 1004.5 236.8H996C998.5 234.5 999.3 231 999.3 224Z" fill="#d4d4d4"/>
<path d="M981 239.5H1020" stroke="#434343" stroke-width="1"/>
<path d="M991.5 243.5V247.5M993.5 243.5V247.5M995.5 243.5V247.5M997.5 243.5V247.5M999.5 243.5V247.5M1001.5 243.5V247.5M1003.5 243.5V247.5M1005.5 243.5V247.5M1007.5 243.5V247.5M1009.5 243.5V247.5" stroke="#3c3c3c" stroke-width="1"/>
<rect x="986" y="252" width="27" height="21" rx="2.5" fill="#333333"/>
<rect x="991.5" y="257" width="17.5" height="1.2" fill="#f0f0f0"/><rect x="991.5" y="261" width="17.5" height="2.2" fill="#f0f0f0"/><rect x="991.5" y="265.8" width="17.5" height="3.2" fill="#f0f0f0"/>
<text x="992.3" y="298.8" font-family="Liberation Sans, sans-serif" font-size="18.5" fill="#d4d4d4" stroke="#d4d4d4" stroke-width="0.5">A</text><rect x="1006.3" y="284.5" width="1.3" height="15.5" fill="#d4d4d4"/>
<text x="992.5" y="326" font-family="Liberation Sans, sans-serif" font-size="18" font-weight="bold" fill="#d4d4d4">¶</text>
<path d="M1000.2 340L1008.7 344.7L1000.2 349.4L991.7 344.7Z" fill="#d4d4d4"/><path d="M992.5 349.5L1000.2 353.8L1008 349.5" fill="none" stroke="#d4d4d4" stroke-width="2"/>
<text x="993" y="383.2" font-family="Liberation Serif, serif" font-style="italic" font-weight="bold" font-size="21" fill="#a8a8a8">O</text>
<defs><linearGradient id="gd2" x1="0" x2="1"><stop offset="0" stop-color="#2a2a2a"/><stop offset="1" stop-color="#f0f0f0"/></linearGradient></defs><rect x="992" y="397.5" width="16.5" height="10" fill="url(#gd2)" stroke="#d4d4d4" stroke-width="1.2"/>
<circle cx="997.5" cy="429.5" r="6.3" fill="#d4d4d4"/><circle cx="1002.3" cy="434.3" r="6.3" fill="#8e8e8e" stroke="#b5b5b5" stroke-width="0.8"/>
<path d="M981 448.5H1020" stroke="#434343" stroke-width="1"/>
<path d="M991.5 452.0V456.0M993.5 452.0V456.0M995.5 452.0V456.0M997.5 452.0V456.0M999.5 452.0V456.0M1001.5 452.0V456.0M1003.5 452.0V456.0M1005.5 452.0V456.0M1007.5 452.0V456.0M1009.5 452.0V456.0" stroke="#3c3c3c" stroke-width="1"/>
<circle cx="1000.2" cy="472.5" r="6.6" fill="#d4d4d4"/><circle cx="1000.2" cy="472.5" r="8.4" fill="none" stroke="#d4d4d4" stroke-width="1" stroke-dasharray="1.6 1.3"/>
<path d="M981 489.0H1020" stroke="#434343" stroke-width="1"/>
<path d="M991.5 493.0V497.0M993.5 493.0V497.0M995.5 493.0V497.0M997.5 493.0V497.0M999.5 493.0V497.0M1001.5 493.0V497.0M1003.5 493.0V497.0M1005.5 493.0V497.0M1007.5 493.0V497.0M1009.5 493.0V497.0" stroke="#3c3c3c" stroke-width="1"/>
<rect x="995.2" y="506.5" width="13" height="13" fill="none" stroke="#d4d4d4" stroke-width="1.2"/><rect x="992.3" y="513.3" width="4.2" height="4.2" fill="#535353" stroke="#d4d4d4" stroke-width="1.1"/><rect x="995.3" y="516" width="3.6" height="3.6" fill="#535353" stroke="#d4d4d4" stroke-width="1.1"/>
<path d="M981 530.5H1020" stroke="#434343" stroke-width="1"/>
<path d="M991.5 534.5V538.5M993.5 534.5V538.5M995.5 534.5V538.5M997.5 534.5V538.5M999.5 534.5V538.5M1001.5 534.5V538.5M1003.5 534.5V538.5M1005.5 534.5V538.5M1007.5 534.5V538.5M1009.5 534.5V538.5" stroke="#3c3c3c" stroke-width="1"/>
<path d="M999.5 547.5H993V561.5H1007V555" fill="none" stroke="#d4d4d4" stroke-width="1.7"/><path d="M1000 554.5L1008 546.5" stroke="#d4d4d4" stroke-width="1.7"/><path d="M1002.5 545.7H1009V552" fill="none" stroke="#d4d4d4" stroke-width="1.7"/>
<rect x="991.5" y="573.8" width="11" height="11.5" fill="none" stroke="#d4d4d4" stroke-width="1.2"/><rect x="995.8" y="580.8" width="13" height="9.7" fill="#535353" stroke="#d4d4d4" stroke-width="1.2"/>
<path d="M981 599.5H1020" stroke="#434343" stroke-width="1"/>
<path d="M991.5 603.5V607.5M993.5 603.5V607.5M995.5 603.5V607.5M997.5 603.5V607.5M999.5 603.5V607.5M1001.5 603.5V607.5M1003.5 603.5V607.5M1005.5 603.5V607.5M1007.5 603.5V607.5M1009.5 603.5V607.5" stroke="#3c3c3c" stroke-width="1"/>
<rect x="995" y="618.5" width="12" height="10.5" fill="none" stroke="#d4d4d4" stroke-width="1.1"/>
<rect x="993.5" y="617.0" width="3" height="3" fill="#d4d4d4"/>
<rect x="999.5" y="617.0" width="3" height="3" fill="#d4d4d4"/>
<rect x="1005.5" y="617.0" width="3" height="3" fill="#d4d4d4"/>
<rect x="993.5" y="622.2" width="3" height="3" fill="#d4d4d4"/>
<rect x="1005.5" y="622.2" width="3" height="3" fill="#d4d4d4"/>
<rect x="993.5" y="627.5" width="3" height="3" fill="#d4d4d4"/>
<rect x="999.5" y="627.5" width="3" height="3" fill="#d4d4d4"/>
<rect x="1005.5" y="627.5" width="3" height="3" fill="#d4d4d4"/>
<rect x="1000.4" y="623.2" width="1.2" height="1.2" fill="#999"/>
<rect x="992.8" y="642.5" width="1.3" height="17.5" fill="#d4d4d4"/><rect x="995.5" y="644.5" width="8" height="5.5" fill="#d4d4d4"/><rect x="995.5" y="653" width="12.8" height="5.2" fill="#d4d4d4"/>
<rect x="993.3" y="672" width="9" height="9" fill="#d4d4d4"/><rect x="998.5" y="677.3" width="9.5" height="9.5" fill="#d4d4d4"/><rect x="998.5" y="677.3" width="3.8" height="3.7" fill="#8a8a8a"/>
<circle cx="1000.6" cy="708" r="5.8" fill="none" stroke="#d4d4d4" stroke-width="1.5"/><circle cx="1000.6" cy="708" r="1.8" fill="#d4d4d4"/>
<path d="M1002.6 708.0L1009.4 708.0M1002.0 709.4L1006.8 714.2M1000.6 710.0L1000.6 716.8M999.2 709.4L994.4 714.2M998.6 708.0L991.8 708.0M999.2 706.6L994.4 701.8M1000.6 706.0L1000.6 699.2M1002.0 706.6L1006.8 701.8" stroke="#d4d4d4" stroke-width="1.2"/>
</svg>
<!--/DOCK-->
<!--PROPS-->
<div class="a" style="left:1031px;top:73px;width:249px;height:27px;background:#424242"></div>
<div class="a" style="left:1106px;top:73px;width:68px;height:27px;background:#494949"></div>
<div class="a" style="left:1031px;top:73px;width:75px;height:28px;background:#535353"></div>
<div class="a" style="left:1031px;top:100px;width:249px;height:620px;background:#535353"></div>
<svg style="left:1266px;top:64px" width="10" height="7"><path d="M1.5 1L4 3.5L1.5 6ZM5.5 1L8 3.5L5.5 6Z" fill="#d8d8d8"/></svg>
<div class="t" style="left:1040px;top:80px;font-weight:bold;font-size:9.8px;line-height:15px;color:#f4f4f4;transform:scaleX(.985)">Propiedades</div>
<div class="t" style="left:1115px;top:80px;color:#a2a2a2;font-weight:bold;font-size:9.8px;line-height:15px;transform:scaleX(1.0)">Bibliotecas</div>
<div class="t c" style="left:1040px;top:111px;color:#c9c9c9">No hay selección</div>
<div class="a" style="left:1032px;top:133px;width:232px;height:1px;background:#5f5f5f"></div>
<div class="t c" style="left:1040px;top:145px;color:#c9c9c9">Documento</div>
<div class="t c" style="left:1084px;top:173px;color:#d4d4d4">Unidades:</div>
<div class="field" style="left:1134px;top:171px;width:113px;height:19px;background:#454545;border-color:#5a5a5a"></div>
<div class="t c" style="left:1140px;top:174px;color:#f4f4f4">Píxeles</div>
<svg style="left:1234px;top:178px" width="10" height="6"><path class="chev" d="M1 1L5 4.5L9 1"/></svg>
<div class="t c" style="left:1054px;top:202px;color:#d4d4d4">Mesa de trabajo:</div>
<div class="field" style="left:1134px;top:200px;width:56px;height:19px;background:#454545;border-color:#5a5a5a"></div>
<div class="t c" style="left:1138px;top:202px;color:#f4f4f4">8</div>
<div class="a" style="left:1190px;top:200px;width:18px;height:19px;border:1px solid #5a5a5a;border-left:none"></div>
<svg style="left:1193px;top:207px" width="10" height="6"><path class="chev" d="M1 1L5 4.5L9 1"/></svg>
<svg style="left:1221px;top:205px" width="30" height="10"><path d="M5.5 0.5V9L0.8 4.8Z M22.5 0.5V9L27.2 4.8Z" fill="#d0d0d0"/></svg>
<div class="btn" style="left:1134px;top:228px;width:135px;height:21px;line-height:19px;border-color:#707070"><span>Editar mesas de trabajo</span></div>
<div class="t c" style="left:1040px;top:283px;color:#c9c9c9">Regla y cuadrículas</div>
<div class="t c" style="left:1040px;top:321px;color:#c9c9c9">Guías</div>
<div class="t c" style="left:1040px;top:359px;color:#c9c9c9">Opciones de ajuste</div>
<div class="t c" style="left:1040px;top:394px;color:#c9c9c9">Preferencias</div>
<div class="t c" style="left:1051px;top:421px;color:#d4d4d4;transform:scaleX(1.052)">Incremento de teclado:</div>
<div class="field" style="left:1161px;top:418px;width:57px;height:19px;background:#454545;border-color:#5a5a5a"></div>
<div class="t c" style="left:1165px;top:420px;color:#f4f4f4">1,0006 px</div>
<div class="t c" style="left:1059px;top:449px;color:#d4d4d4">Usar delimitadores de previsualización</div>
<div class="t c" style="left:1059px;top:473px;color:#d4d4d4">Escalar vértices</div>
<div class="t c" style="left:1059px;top:497px;color:#d4d4d4">Escalar trazos y efectos</div>
<div class="t c" style="left:1040px;top:542px;color:#c9c9c9">Acciones rápidas</div>
<div class="btn" style="left:1041px;top:567px;width:228px;height:21px;line-height:19px;border-color:#707070"><span>Ajustar documento</span></div>
<div class="btn" style="left:1041px;top:598px;width:228px;height:21px;line-height:19px;border-color:#707070"><span>Preferencias</span></div>
<svg style="left:1031px;top:100px" width="249" height="620" viewBox="1031 100 249 620">
<path d="M1040 268.5H1263M1040 307.5H1263M1040 346.500H1263M1040 384.500H1263M1040 523.500H1263" stroke="#4a4a4a" stroke-width="1"/>
<!-- checkboxes -->
<g fill="#d9d9d9"><rect x="1043" y="451" width="10.5" height="10.5" rx="1.5"/><rect x="1043" y="474.5" width="10.5" height="10.5" rx="1.5"/><rect x="1043" y="498.5" width="10.5" height="10.5" rx="1.5"/></g>
<path d="M1045 456.3L1047.6 459L1051.8 453.3M1045 479.8L1047.6 482.5L1051.8 476.8M1045 503.8L1047.6 506.5L1051.8 500.8" fill="none" stroke="#2f2f2f" stroke-width="1.6"/>
<!-- ruler icon selected -->
<rect x="1157" y="279" width="21.5" height="20.5" rx="2" fill="#2b2b2b"/>
<path d="M1161.2 282.3H1176.200V286.4H1165.2V297.600H1161.2Z" fill="#f2f2f2"/>
<path d="M1166.500 284.300H1175.500" stroke="#2b2b2b" stroke-width="1" stroke-dasharray="1 1.500"/><path d="M1163.200 288V297" stroke="#2b2b2b" stroke-width="1" stroke-dasharray="1 1.500"/>
<!-- grid icon -->
<path d="M1190.5 282.5H1205.5V297.5H1190.5ZM1195.5 282.5V297.5M1200.5 282.5V297.5M1190.5 287.5H1205.5M1190.5 292.5H1205.5" fill="none" stroke="#d0d0d0" stroke-width="1.1"/>
<!-- transparency grid -->
<rect x="1220.5" y="282.5" width="15" height="15" fill="#6c6c6c" stroke="#d0d0d0" stroke-width="1.1"/>
<g fill="#a0a0a0"><rect x="1222" y="284" width="3" height="3"/><rect x="1228" y="284" width="3" height="3"/><rect x="1225" y="287" width="3" height="3"/><rect x="1231" y="287" width="3" height="3"/><rect x="1222" y="290" width="3" height="3"/><rect x="1228" y="290" width="3" height="3"/><rect x="1225" y="293" width="3" height="3"/><rect x="1231" y="293" width="3" height="3"/></g>
<!-- guides selected -->
<rect x="1127.5" y="317.5" width="22" height="21" rx="2" fill="#2b2b2b"/>
<path d="M1133.500 320.400V336M1137.200 320.400V336M1130 325H1147.200M1130 332.700H1147.200" stroke="#f2f2f2" stroke-width="1.200" fill="none"/>
<!-- lock guides -->
<path d="M1163 320.400V335.500M1166.800 320.400V335.500M1160.500 325H1175.500M1160.500 332.200H1168" stroke="#d0d0d0" stroke-width="1.100" fill="none"/>
<rect x="1169.600" y="330.800" width="7.400" height="5.800" fill="#d0d0d0"/><path d="M1171.200 330.800V329.300A2.100 2.100 0 0 1 1175.400 329.300" fill="none" stroke="#d0d0d0" stroke-width="1.100"/>
<!-- smart guides -->
<path d="M1193.700 320.400V335.500M1190.200 325H1205.800M1199.500 321.300L1195.300 325L1199.500 328.700" stroke="#d0d0d0" stroke-width="1.100" fill="none"/><path d="M1204.500 327.800L1200.800 332.800H1203.500L1202 336.800L1206.800 331.300H1204L1205.800 327.800Z" fill="#d0d0d0"/>
<!-- snap options -->
<g stroke="#d0d0d0" fill="none"><path d="M1163.5 358V374" stroke-width="1.1"/><circle cx="1163.5" cy="365" r="1.6" fill="#d0d0d0" stroke="none"/><path d="M1168 362.5H1172.5A2.7 2.7 0 0 1 1172.5 368H1168" stroke-width="1.8"/>
<path d="M1192.5 358V374M1196.5 358V374M1191 360.5H1198M1191 364.5H1198M1191 368.5H1198M1191 372.5H1198" stroke-width="0.9"/><path d="M1199 362.5H1202.5A2.7 2.7 0 0 1 1202.5 368H1199" stroke-width="1.8"/>
<path d="M1229 362.5H1233A2.7 2.7 0 0 1 1233 368H1229" stroke-width="1.8"/></g>
<g fill="#d0d0d0"><rect x="1222" y="358.5" width="3.6" height="3.6"/><rect x="1222" y="364" width="3.6" height="3.6"/><rect x="1222" y="369.5" width="3.6" height="3.6"/></g>
</svg>

<!--/PROPS-->
<!--TRAZO-->
<div class="a" style="left:744px;top:237px;width:236px;height:351px;background:#535353;border:1px solid #3d3d3d;border-right:none"></div>
<div class="a" style="left:745px;top:238px;width:235px;height:30px;background:#424242"></div>
<div class="a" style="left:745px;top:241px;width:50px;height:28px;background:#535353"></div>
<svg style="left:745px;top:240px" width="232" height="346" viewBox="745 240 232 346">
<path d="M813.5 241V268M832.5 241V268M851.5 241V268M870.5 241V268M889.5 241V268M915.5 241V268" stroke="#3a3a3a" stroke-width="1"/>
<path d="M750 253L752.7 250L755.4 253M750 256.5L752.7 259.5L755.4 256.5" fill="none" stroke="#b8b8b8" stroke-width="1.2"/>
<path d="M939 251.5L942.3 254.8L939 258M943.8 251.5L947 254.8L943.8 258" fill="none" stroke="#d6d6d6" stroke-width="1.4"/>
<rect x="955" y="249.5" width="1.2" height="10.5" fill="#bdbdbd"/>
<path d="M962.5 251.2H973.5M962.5 254.8H973.5M962.5 258.4H973.5" stroke="#cacaca" stroke-width="1.1"/>
<!-- grosor -->
<g fill="none" stroke="#616161"><rect x="816.5" y="275.5" width="18" height="19"/><rect x="834.5" y="275.5" width="51" height="19" fill="#454545"/><rect x="885.5" y="275.5" width="17.500" height="19"/></g>
<path d="M822 282.5L825.5 279L829 282.5M822 287.5L825.5 291L829 287.5" fill="none" stroke="#d8d8d8" stroke-width="1.3"/>
<path d="M890 283L894 286.8L898 283" class="chev"/>
<!-- remate buttons -->
<g fill="none" stroke="#5e5e5e"><rect x="817.5" y="300.500" width="21" height="21"/><rect x="862.5" y="300.500" width="21" height="21"/></g>
<rect x="839.5" y="300.500" width="22" height="21" fill="#2b2b2b"/>
<path d="M826 304H834V318H826V314H822V308H826Z" fill="#a8a8a8"/><path d="M822.5 311H832" stroke="#535353" stroke-width="1"/><rect x="821" y="309.600" width="2.800" height="2.800" fill="#535353" stroke="#a8a8a8" stroke-width=".8"/>
<path d="M851 304H858V318H851A7 7 0 0 1 851 304Z" fill="#f4f4f4"/><path d="M851 311H858" stroke="#2b2b2b" stroke-width="3.500"/>
<path d="M867 304H879.500V318H867Z" fill="#c6c6c6"/><path d="M873 311H879.500" stroke="#535353" stroke-width="3.500"/>
<!-- vertice buttons -->
<rect x="817.5" y="327.500" width="21" height="21" fill="#2b2b2b"/>
<g fill="none" stroke="#5e5e5e"><rect x="839.500" y="327.500" width="22" height="21"/><rect x="862.5" y="327.500" width="21" height="21"/></g>
<path d="M821.500 331.500H835V337.500H827.500V345H821.500Z" fill="#f4f4f4"/><path d="M825 345V335H835" fill="none" stroke="#2b2b2b" stroke-width="1.200"/><rect x="823.500" y="333.500" width="3" height="3" fill="#2b2b2b"/>
<path d="M850 331.500H858V337.500H850.500V345H844.500V337A5.500 5.500 0 0 1 850 331.500Z" fill="#bdbdbd"/><path d="M848 345V335H858" fill="none" stroke="#535353" stroke-width="1.200"/>
<path d="M872 331.500H881V337.500H873.500V345H867.500V336Z" fill="#bdbdbd"/><path d="M871 345V335H881" fill="none" stroke="#535353" stroke-width="1.200"/>
<rect x="928.500" y="328.500" width="37" height="19" fill="#454545" stroke="#616161"/>
<!-- alinear trazo buttons -->
<rect x="817.5" y="355.500" width="21" height="20" fill="#2b2b2b"/>
<g fill="none" stroke="#5e5e5e"><rect x="839.500" y="355.500" width="22" height="20"/><rect x="862.5" y="355.500" width="21" height="20"/></g>
<path d="M821.500 358.500H827.500V366.500H835V372.500H821.500Z" fill="#f4f4f4"/><path d="M824.500 358.500V369.500H835" fill="none" stroke="#2b2b2b" stroke-width="1.200"/>
<path d="M847.500 358.500H851.500V366.500H858V372.500H845.500V368Z" fill="#bdbdbd"/><path d="M845.500 358.500V372.500H858" fill="none" stroke="#bdbdbd" stroke-width="1"/><circle cx="846" cy="372" r="1.500" fill="#535353" stroke="#bdbdbd" stroke-width=".8"/>
<path d="M867 358.500H875V364H881V372.500H867Z" fill="#bdbdbd"/><path d="M875.500 358.500V364.500H881" fill="none" stroke="#535353" stroke-width="1"/>
<path d="M751 382.500H971" stroke="#484848" stroke-width="1"/>
<!-- checkbox -->
<rect x="751.500" y="392.500" width="11.500" height="11.500" rx="1.500" fill="#dadada"/><path d="M753.800 398.300L756.500 401L761 395" fill="none" stroke="#2f2f2f" stroke-width="1.700"/>
<!-- dash align buttons -->
<rect x="898.500" y="389" width="36" height="20" fill="none" stroke="#5e5e5e"/>
<rect x="935.500" y="388.500" width="37.500" height="21" rx="1.500" fill="#2b2b2b"/>
<path d="M903 403V394.500H907M912 394.500H921M926 394.500H930V399M930 403H925M920 403.500H914M908 403.500H903" fill="none" stroke="#a8a8a8" stroke-width="1.300"/>
<path d="M941 398V394.500H946M951 394.500H958M963 394.500H968V398M941 400V403.500H946M951 403.500H958M963 403.500H968V400" fill="none" stroke="#f4f4f4" stroke-width="1.600"/>
<!-- dash fields -->
<g stroke="#606060"><rect x="750.500" y="415.500" width="34" height="19.500" fill="#454545"/><rect x="787.500" y="415.500" width="34" height="19.500" fill="#454545"/><rect x="825" y="415.500" width="33.500" height="19.500" fill="#464646"/><rect x="862" y="415.500" width="34" height="19.500" fill="#464646"/><rect x="900" y="415.500" width="34" height="19.500" fill="#464646"/><rect x="938" y="415.500" width="34" height="19.500" fill="#464646"/></g>
<path d="M751 457.500H971" stroke="#484848" stroke-width="1"/>
<!-- arrowheads -->
<rect x="817" y="465.500" width="37.500" height="19.500" fill="#e6e6e6"/><rect x="854.500" y="465.500" width="17.500" height="19.500" fill="#454545" stroke="#5e5e5e"/>
<rect x="880" y="465.500" width="37" height="19.500" fill="#e6e6e6"/><rect x="917" y="465.500" width="18" height="19.500" fill="#454545" stroke="#5e5e5e"/>
<path d="M822 475.500H849M885 475.500H912" stroke="#000" stroke-width="3"/>
<path d="M859.500 473L863.300 476.800L867 473M922 473L925.800 476.800L929.500 473" class="chev"/>
<path d="M957 471.500H967M964 468.500L967.500 471.500L964 474.500M967 479.500H957M960 476.500L956.500 479.500L960 482.500" fill="none" stroke="#6f6f6f" stroke-width="1.500"/>
<!-- escala (disabled) -->
<g fill="none" stroke="#5b5b5b"><rect x="816.500" y="496.500" width="55" height="19"/><rect x="878.500" y="496.500" width="55" height="19"/></g>
<path d="M822 503.500L825.500 500L829 503.500M822 508.500L825.500 512L829 508.500M884 503.500L887.500 500L891 503.500M884 508.500L887.500 512L891 508.500" fill="none" stroke="#666" stroke-width="1.300"/>
<path d="M958 499L965.500 513M958.300 506V503A3 3 0 0 1 964.300 503V504.500M958.300 508V510A3 3 0 0 0 964.300 510V508.500" fill="none" stroke="#6b6b6b" stroke-width="1.500"/>
<!-- alinear (disabled) -->
<g fill="none" stroke="#5b5b5b"><rect x="816.500" y="524.500" width="22" height="20.500"/><rect x="838.500" y="524.500" width="22" height="20.500"/></g>
<path d="M821 531H831M821 537.500H829M829 534.500L832.500 537.500L829 540.500M834 530V541" fill="none" stroke="#686868" stroke-width="1.200"/>
<path d="M843 531H856M843 537.500H852M852 534.500L855.500 537.500L852 540.500" fill="none" stroke="#686868" stroke-width="1.200"/>
<!-- perfil -->
<rect x="817" y="560" width="85" height="19.500" fill="#e6e6e6"/><rect x="902" y="560" width="18" height="19.500" fill="#454545" stroke="#5e5e5e"/>
<path d="M823 570H852" stroke="#000" stroke-width="3"/>
<path d="M907 568L910.800 571.800L914.500 568" class="chev"/>
<path d="M931.500 565.500V574.500L935.500 570ZM943.500 565.500V574.500L939.500 570Z" fill="#6a6a6a"/><path d="M937.500 564V576" stroke="#6a6a6a" stroke-width="1" stroke-dasharray="1.500 1"/>
<path d="M957.500 564.500H966.500L962 568.500ZM957.500 576.500H966.500L962 572.500Z" fill="#6a6a6a"/><path d="M956 570.500H968" stroke="#6a6a6a" stroke-width="1" stroke-dasharray="1.500 1"/>
</svg>
<div class="t" style="left:760px;top:247px;font-weight:bold;color:#f4f4f4;font-size:9.8px;line-height:15px;transform:scaleX(1.01)">Trazo</div>
<div class="t c" style="left:804px;top:247px;color:#a0a0a0;width:10.5px;overflow:hidden;font-weight:bold;-webkit-text-stroke:0;transform:scaleX(.95)">Ca</div>
<div class="t c" style="left:823px;top:247px;color:#a0a0a0;width:10.5px;overflow:hidden;font-weight:bold;-webkit-text-stroke:0;transform:scaleX(.95)">Pá</div>
<div class="t c" style="left:842px;top:247px;color:#a0a0a0;width:10.5px;overflow:hidden;font-weight:bold;-webkit-text-stroke:0;transform:scaleX(.95)">Ca</div>
<div class="t c" style="left:860.5px;top:247px;color:#a0a0a0;width:10.5px;overflow:hidden;font-weight:bold;-webkit-text-stroke:0;transform:scaleX(.95)">Op</div>
<div class="t c" style="left:880px;top:247px;color:#a0a0a0;width:10.5px;overflow:hidden;font-weight:bold;-webkit-text-stroke:0;transform:scaleX(.95)">De</div>
<div class="t c" style="left:899px;top:247px;color:#a0a0a0;font-weight:bold;-webkit-text-stroke:0;transform:scaleX(.95)">Tra</div>
<div class="t c tr" style="right:467px;top:278px">Grosor:</div>
<div class="t c" style="left:838px;top:278px;color:#f2f2f2;transform:scaleX(.997)">21,8683 pt</div>
<div class="t c tr" style="right:467px;top:304px">Remate:</div>
<div class="t c tr" style="right:467px;top:331px">Vértice:</div>
<div class="t c" style="left:893px;top:331px">Límite:</div>
<div class="t c" style="left:932px;top:331px;color:#f2f2f2">10</div>
<div class="t c" style="left:969px;top:331px">x</div>
<div class="t c tr" style="right:467px;top:358px">Alinear trazo:</div>
<div class="t c" style="left:768px;top:391px;color:#f0f0f0">Línea discontinua</div>
<div class="t c" style="left:755px;top:418px;color:#f2f2f2">0 pt</div>
<div class="t c" style="left:792px;top:418px;color:#f2f2f2">40 pt</div>
<div class="t c" style="left:754px;top:437px">guión</div>
<div class="t c" style="left:790px;top:437px">hueco</div>
<div class="t c" style="left:828px;top:437px">guión</div>
<div class="t c" style="left:865px;top:437px">hueco</div>
<div class="t c" style="left:904px;top:437px">guión</div>
<div class="t c" style="left:941px;top:437px">hueco</div>
<div class="t c tr" style="right:467px;top:469px">Puntas flecha:</div>
<div class="t c tr" style="right:467px;top:499px;color:#757575">Escala:</div>
<div class="t c" style="left:838px;top:499px;color:#686868">100%</div>
<div class="t c" style="left:900px;top:499px;color:#686868">100%</div>
<div class="t c tr" style="right:467px;top:528px;color:#757575">Alinear:</div>
<div class="t c tr" style="right:467px;top:563px">Perfil:</div>
<div class="t c" style="left:857px;top:564px;color:#111">Uniforme</div>

<!--/TRAZO-->
</div>
</body>
</html>
